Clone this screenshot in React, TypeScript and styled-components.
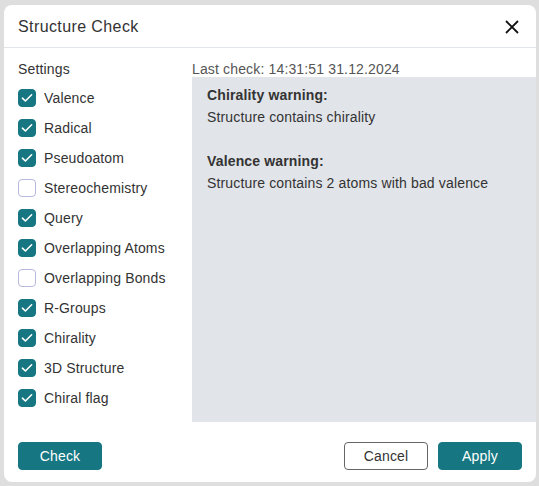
import React, { useState } from "react";
import styled, { createGlobalStyle } from "styled-components";

const GlobalStyle = createGlobalStyle`
  html, body {
    margin: 0;
    padding: 0;
    background: #dedede;
    font-family: Arial, "Liberation Sans", sans-serif;
    letter-spacing: 0.15px;
  }
`;

const teal = "#167782";

const Dialog = styled.div`
  width: 532px;
  height: 477px;
  margin: 5px 0 0 4px;
  background: #fff;
  border-radius: 8px;
  display: flex;
  flex-direction: column;
  overflow: hidden;
  color: #333;
`;

const Header = styled.div`
  height: 43px;
  box-sizing: border-box;
  border-bottom: 1px solid #e1e4e9;
  display: flex;
  align-items: center;
  justify-content: space-between;
  padding: 1px 16px 0 14px;
`;

const Title = styled.h2`
  margin: 0;
  font-size: 16px;
  letter-spacing: 0.4px;
  font-weight: normal;
  color: #333;
`;

const CloseButton = styled.button`
  border: none;
  background: none;
  padding: 0;
  width: 16px;
  height: 16px;
  display: flex;
  align-items: center;
  justify-content: center;
  cursor: pointer;
`;

const Body = styled.div`
  flex: 1;
  display: grid;
  grid-template-columns: 174px 1fr;
  padding: 12px 0 0 14px;
`;

const Column = styled.div`
  display: flex;
  flex-direction: column;
`;

const Caption = styled.div<{ $muted?: boolean }>`
  font-size: 14px;
  line-height: 16px;
  padding-top: 1px;
  height: 16px;
  box-sizing: border-box;
  color: ${(p) => (p.$muted ? "#555" : "#333")};
`;

const OptionList = styled.div`
  margin-top: 7px;
  display: flex;
  flex-direction: column;
`;

const OptionRow = styled.label`
  height: 30px;
  display: flex;
  align-items: center;
  gap: 8px;
  font-size: 14px;
  cursor: pointer;
`;

const Box = styled.span<{ $checked: boolean }>`
  width: 18px;
  height: 18px;
  box-sizing: border-box;
  border-radius: 4px;
  background: ${(p) => (p.$checked ? teal : "#fff")};
  border: 1px solid ${(p) => (p.$checked ? teal : "#b6b9dc")};
  display: flex;
  align-items: center;
  justify-content: center;
`;

const ResultPanel = styled.div`
  margin-top: 1px;
  height: 345px;
  background: #e1e4e9;
  padding: 7px 15px;
  box-sizing: border-box;
  font-size: 14px;
  line-height: 22px;
`;

const Warning = styled.div`
  margin-bottom: 22px;
`;

const WarningTitle = styled.div`
  font-weight: bold;
`;

const Footer = styled.div`
  display: flex;
  align-items: center;
  padding: 19px 14px 12px 14px;
  gap: 10px;
`;

const Spacer = styled.div`
  flex: 1;
`;

const Button = styled.button<{ $primary?: boolean }>`
  width: 84px;
  height: 28px;
  border-radius: 4px;
  font-family: inherit;
  letter-spacing: inherit;
  font-size: 14px;
  cursor: pointer;
  background: ${(p) => (p.$primary ? teal : "#fff")};
  color: ${(p) => (p.$primary ? "#fff" : "#333")};
  border: 1px solid ${(p) => (p.$primary ? teal : "#666")};
`;

const options = [
  { name: "Valence", on: true },
  { name: "Radical", on: true },
  { name: "Pseudoatom", on: true },
  { name: "Stereochemistry", on: false },
  { name: "Query", on: true },
  { name: "Overlapping Atoms", on: true },
  { name: "Overlapping Bonds", on: false },
  { name: "R-Groups", on: true },
  { name: "Chirality", on: true },
  { name: "3D Structure", on: true },
  { name: "Chiral flag", on: true },
];

const App: React.FC = () => {
  const [checked, setChecked] = useState(options.map((o) => o.on));

  const toggle = (i: number) => {
    setChecked(checked.map((c, j) => (j === i ? !c : c)));
  };

  return (
    <>
      <GlobalStyle />
      <Dialog>
        <Header>
          <Title>Structure Check</Title>
          <CloseButton>
            <svg width="14" height="14" viewBox="0 0 14 14">
              <path d="M1 1L13 13M13 1L1 13" stroke="#111" strokeWidth="1.8" />
            </svg>
          </CloseButton>
        </Header>
        <Body>
          <Column>
            <Caption>Settings</Caption>
            <OptionList>
              {options.map((o, i) => (
                <OptionRow key={o.name} onClick={() => toggle(i)}>
                  <Box $checked={checked[i]}>
                    {checked[i] && (
                      <svg width="12" height="10" viewBox="0 0 12 10">
                        <path
                          d="M1.4 5.2L4.4 8L10.6 1.8"
                          stroke="#fff"
                          strokeWidth="1.6"
                          fill="none"
                          strokeLinecap="round"
                          strokeLinejoin="round"
                        />
                      </svg>
                    )}
                  </Box>
                  {o.name}
                </OptionRow>
              ))}
            </OptionList>
          </Column>
          <Column>
            <Caption $muted>Last check: 14:31:51 31.12.2024</Caption>
            <ResultPanel>
              <Warning>
                <WarningTitle>Chirality warning:</WarningTitle>
                <div>Structure contains chirality</div>
              </Warning>
              <Warning>
                <WarningTitle>Valence warning:</WarningTitle>
                <div>Structure contains 2 atoms with bad valence</div>
              </Warning>
            </ResultPanel>
          </Column>
        </Body>
        <Footer>
          <Button $primary>Check</Button>
          <Spacer />
          <Button>Cancel</Button>
          <Button $primary>Apply</Button>
        </Footer>
      </Dialog>
    </>
  );
};

export default App;
